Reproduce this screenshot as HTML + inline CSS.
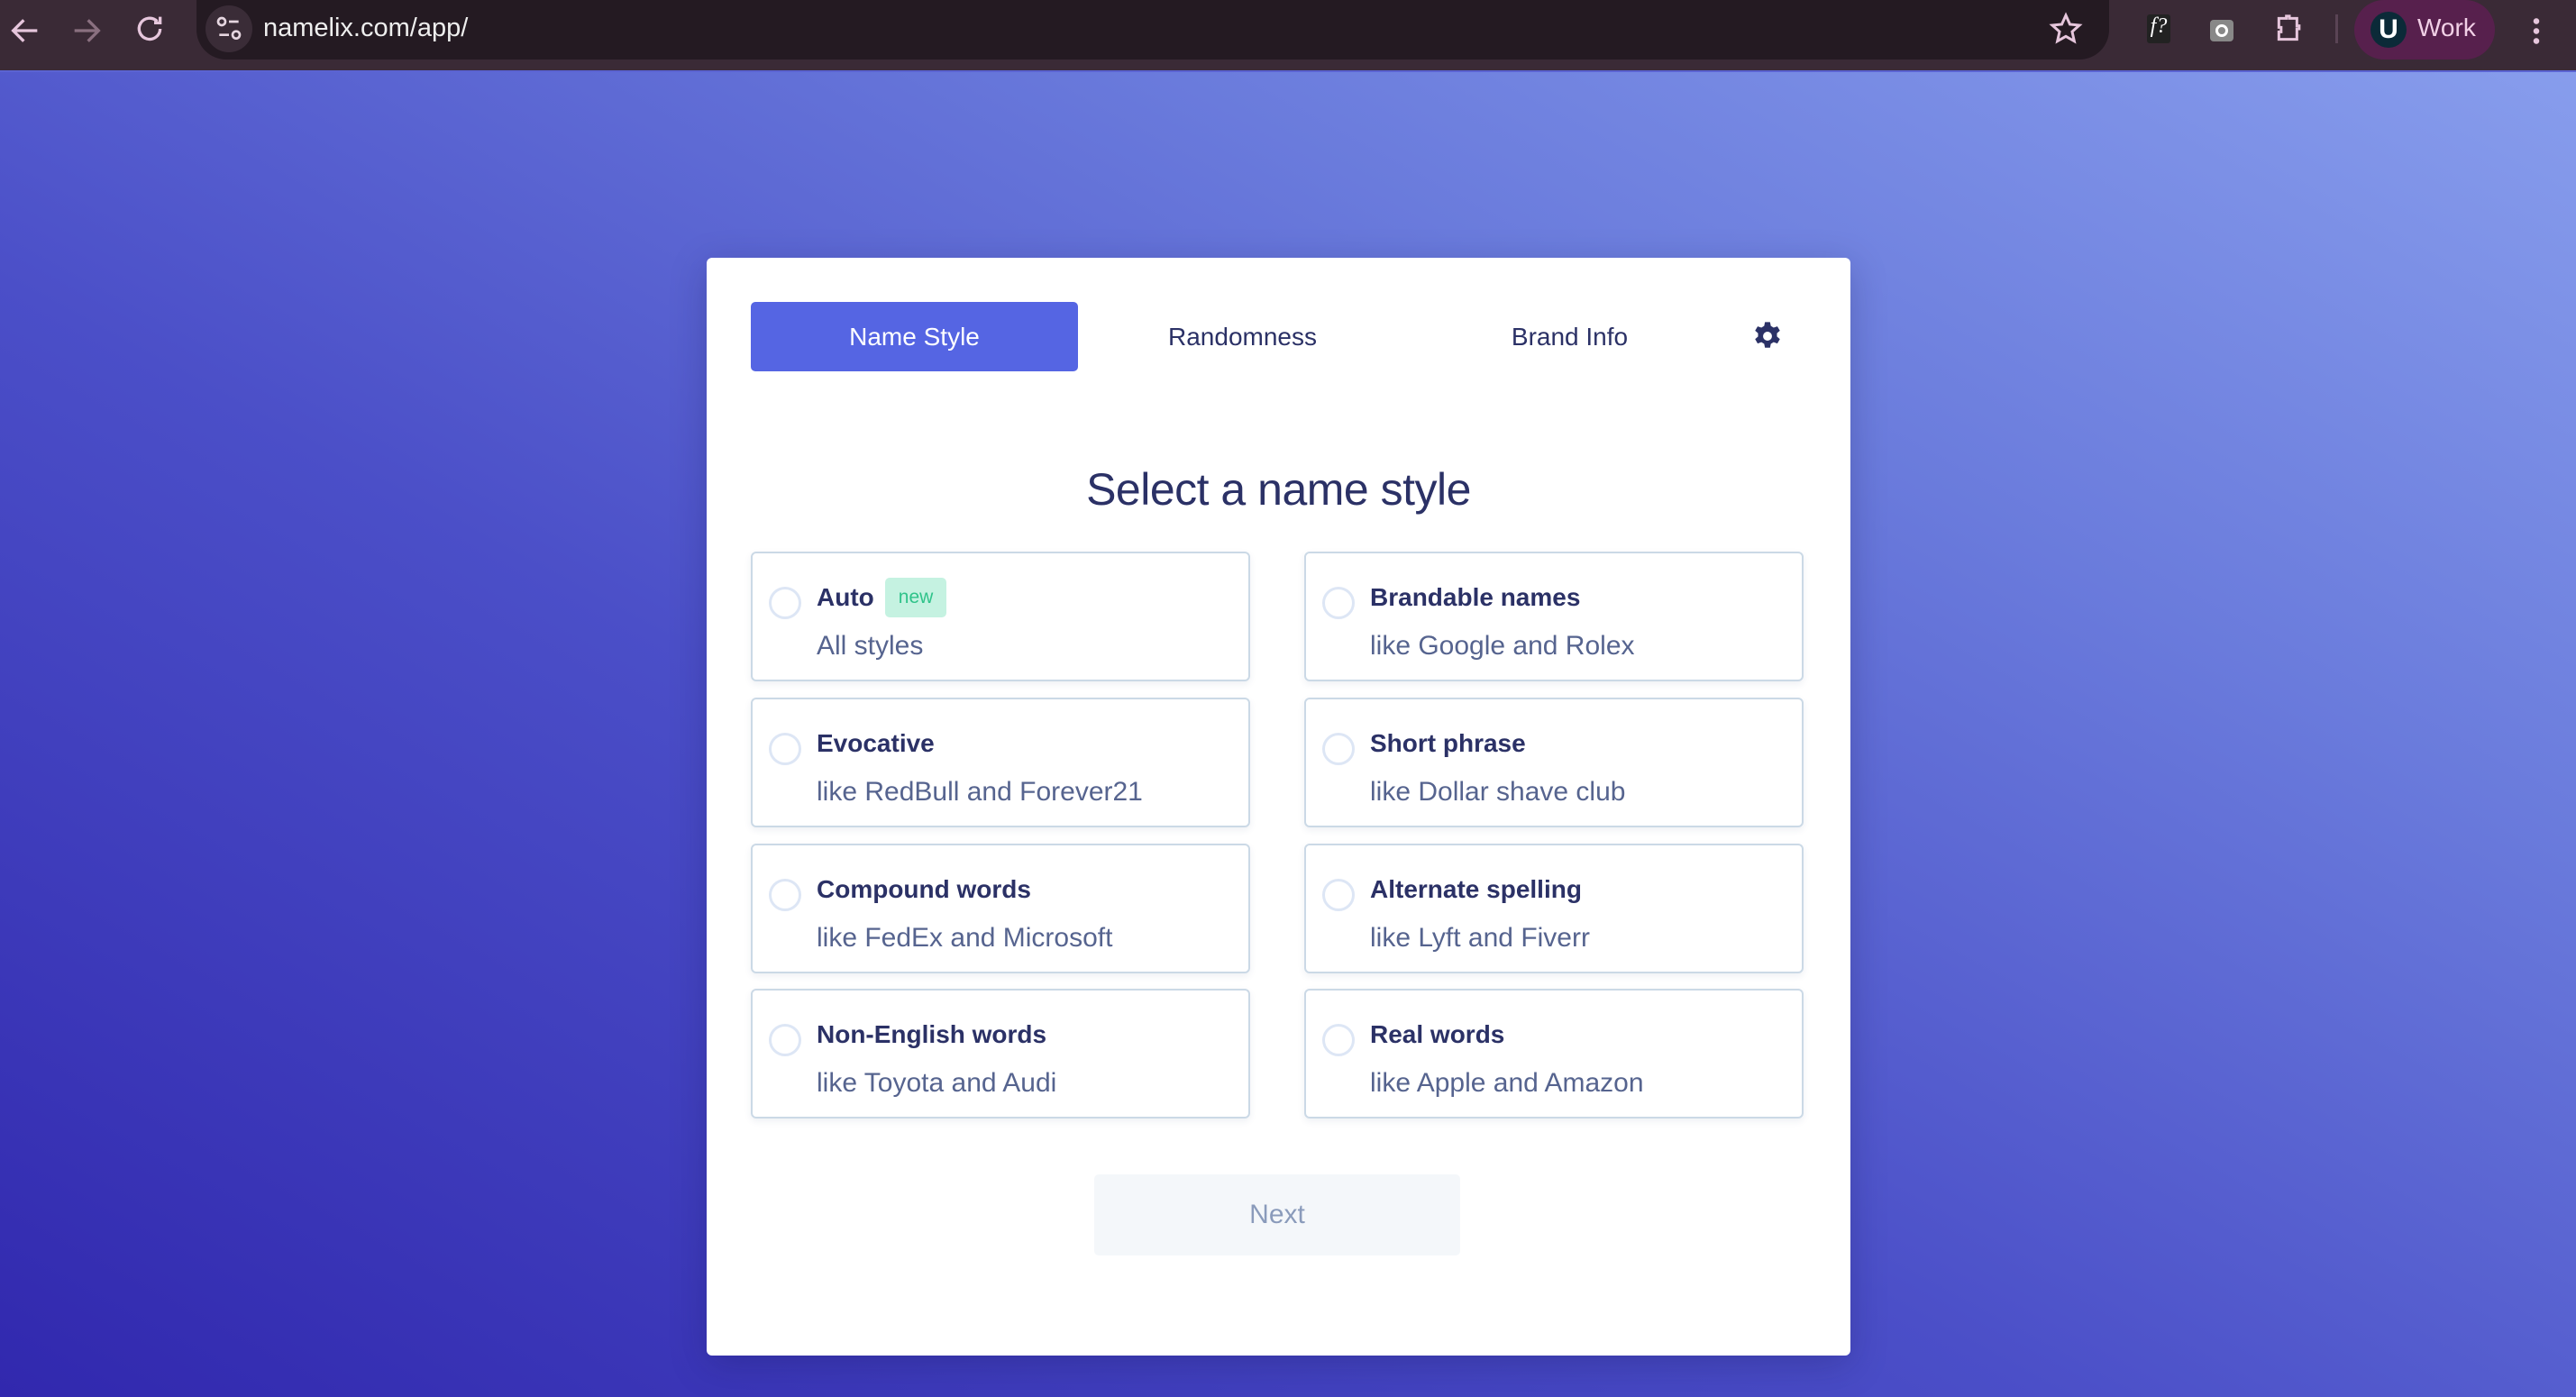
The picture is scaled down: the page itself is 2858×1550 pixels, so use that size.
<!DOCTYPE html>
<html><head><meta charset="utf-8"><style>
*{margin:0;padding:0;box-sizing:border-box}
body{width:2858px;height:1550px;overflow:hidden;font-family:"Liberation Sans",sans-serif;background:linear-gradient(to top right,#3128ae 0%,#4b4fc8 40%,#6a7bdc 70%,#8aa0ee 100%);position:relative}
.bar{position:absolute;left:0;top:0;width:2858px;height:80px;background:#3a2a36}
.url{position:absolute;left:218px;top:0;width:2122px;height:66px;background:#241a22;border-radius:0 0 33px 33px}
.card{position:absolute;left:784px;top:286px;width:1269px;height:1218px;background:#fff;border-radius:6px;box-shadow:0 10px 40px rgba(20,20,80,.25)}
.tab{position:absolute;top:49px;height:77px;width:363px;font-size:28px;color:#2b3166;display:flex;align-items:center;justify-content:center}
.active{background:#5565e3;color:#fff;border-radius:5px}
h1{position:absolute;top:228px;left:0;width:100%;text-align:center;font-size:50px;font-weight:normal;color:#2b3166;letter-spacing:-0.5px}
.opt{position:absolute;width:554px;height:144px;border:2px solid #cbd9e6;border-radius:6px;box-shadow:0 3px 8px rgba(40,60,120,.08)}
.opt .r{position:absolute;left:18px;top:37px;width:36px;height:36px;border:3px solid #dde6f5;border-radius:50%}
.opt .t{position:absolute;left:71px;top:32px;height:34px;font-size:28px;font-weight:bold;color:#2b3166;display:flex;align-items:center}
.opt .s{position:absolute;left:71px;top:86px;font-size:30px;color:#56648f}
.new{display:inline-block;margin-left:12px;background:#c5f2e1;color:#2fc38a;font-size:21px;font-weight:normal;padding:10px 15px;border-radius:5px}
.next{position:absolute;left:430px;top:1017px;width:406px;height:90px;background:#f4f7fa;border-radius:5px;color:#8a9bbb;font-size:30px;display:flex;align-items:center;justify-content:center}
</style></head><body>
<div class="bar">
<div class="url"></div>
<svg style="position:absolute;left:8px;top:14px" width="40" height="40" viewBox="0 0 24 24" fill="none" stroke="#e6c6dc" stroke-width="2"><path d="M20 12H5M11 5l-7 7 7 7"/></svg>
<svg style="position:absolute;left:76px;top:14px" width="40" height="40" viewBox="0 0 24 24" fill="none" stroke="#8a7080" stroke-width="2"><path d="M4 12h15M13 5l7 7-7 7"/></svg>
<svg style="position:absolute;left:146px;top:12px" width="40" height="40" viewBox="0 0 24 24" fill="none" stroke="#e6c6dc" stroke-width="2"><path d="M19 12a7 7 0 1 1-2-5M19 4v4h-4"/></svg>
<div style="position:absolute;left:228px;top:6px;width:52px;height:52px;border-radius:50%;background:#3a2c37"></div>
<svg style="position:absolute;left:238px;top:16px" width="32" height="32" viewBox="0 0 24 24" fill="none" stroke="#e6d6e0" stroke-width="2"><circle cx="6" cy="6" r="3"/><path d="M12 6h8M4 17h8"/><circle cx="18" cy="17" r="3"/></svg>
<div style="position:absolute;left:292px;top:15px;font-size:29px;color:#eee">namelix.com/app/</div>
<svg style="position:absolute;left:2272px;top:12px" width="40" height="40" viewBox="0 0 24 24" fill="none" stroke="#e6c6dc" stroke-width="1.8"><path d="M12 3l2.7 6 6.3.6-4.8 4.3 1.4 6.3L12 17l-5.6 3.2 1.4-6.3L3 9.6 9.3 9z"/></svg>
<div style="position:absolute;left:2382px;top:16px;width:26px;height:32px;background:#222;border-radius:3px;color:#fff;font-style:italic;font-family:'Liberation Serif',serif;font-size:24px;text-align:center">f?</div>
<div style="position:absolute;left:2452px;top:22px;width:26px;height:24px;background:#888;border-radius:4px"><div style="position:absolute;left:6px;top:5px;width:14px;height:14px;border:3px solid #fff;border-radius:50%"></div></div>
<svg style="position:absolute;left:2520px;top:12px" width="40" height="40" viewBox="0 0 24 24" fill="none" stroke="#e6c6dc" stroke-width="1.8"><path d="M5 5h5V3.5h2V5h5v5h1.5v2H17v7H5v-5h1.5v-3H5z"/></svg>
<div style="position:absolute;left:2591px;top:16px;width:3px;height:32px;background:#5a4455"></div>
<div style="position:absolute;left:2612px;top:0;width:156px;height:66px;background:#57204d;border-radius:33px"></div>
<div style="position:absolute;left:2630px;top:13px;width:40px;height:40px;background:#0b2a38;border-radius:50%;color:#fff;font-weight:bold;font-size:30px;text-align:center;line-height:40px">U</div>
<div style="position:absolute;left:2682px;top:15px;font-size:28px;color:#f1d0e6">Work</div>
<div style="position:absolute;left:2810px;top:18px;width:8px;height:32px;background:radial-gradient(circle,#e6c6dc 3px,transparent 3.5px) 0 0/8px 11px"></div>
</div>
<div style="position:absolute;left:0;top:78px;width:2858px;height:2px;background:#5b63d2"></div>
<div class="card">
<div class="tab active" style="left:49px">Name Style</div>
<div class="tab" style="left:413px">Randomness</div>
<div class="tab" style="left:776px">Brand Info</div>
<svg style="position:absolute;left:1160px;top:70px" width="34" height="34" viewBox="0 0 24 24"><path fill="#2b3166" fill-rule="evenodd" d="M10 1h4l.6 3 2.2 1.3 2.9-1 2 3.4-2.3 2v2.6l2.3 2-2 3.4-2.9-1-2.2 1.3-.6 3h-4l-.6-3-2.2-1.3-2.9 1-2-3.4 2.3-2v-2.6l-2.3-2 2-3.4 2.9 1L9.4 4zM12 8.5a3.5 3.5 0 1 0 0 7 3.5 3.5 0 0 0 0-7z"/></svg>
<h1>Select a name style</h1>
<div class="opt" style="left:49px;top:326px"><div class="r"></div><div class="t">Auto<span class="new">new</span></div><div class="s">All styles</div></div>
<div class="opt" style="left:663px;top:326px"><div class="r"></div><div class="t">Brandable names</div><div class="s">like Google and Rolex</div></div>
<div class="opt" style="left:49px;top:488px"><div class="r"></div><div class="t">Evocative</div><div class="s">like RedBull and Forever21</div></div>
<div class="opt" style="left:663px;top:488px"><div class="r"></div><div class="t">Short phrase</div><div class="s">like Dollar shave club</div></div>
<div class="opt" style="left:49px;top:650px"><div class="r"></div><div class="t">Compound words</div><div class="s">like FedEx and Microsoft</div></div>
<div class="opt" style="left:663px;top:650px"><div class="r"></div><div class="t">Alternate spelling</div><div class="s">like Lyft and Fiverr</div></div>
<div class="opt" style="left:49px;top:811px"><div class="r"></div><div class="t">Non-English words</div><div class="s">like Toyota and Audi</div></div>
<div class="opt" style="left:663px;top:811px"><div class="r"></div><div class="t">Real words</div><div class="s">like Apple and Amazon</div></div>
<div class="next">Next</div>
</div>
</body></html>
